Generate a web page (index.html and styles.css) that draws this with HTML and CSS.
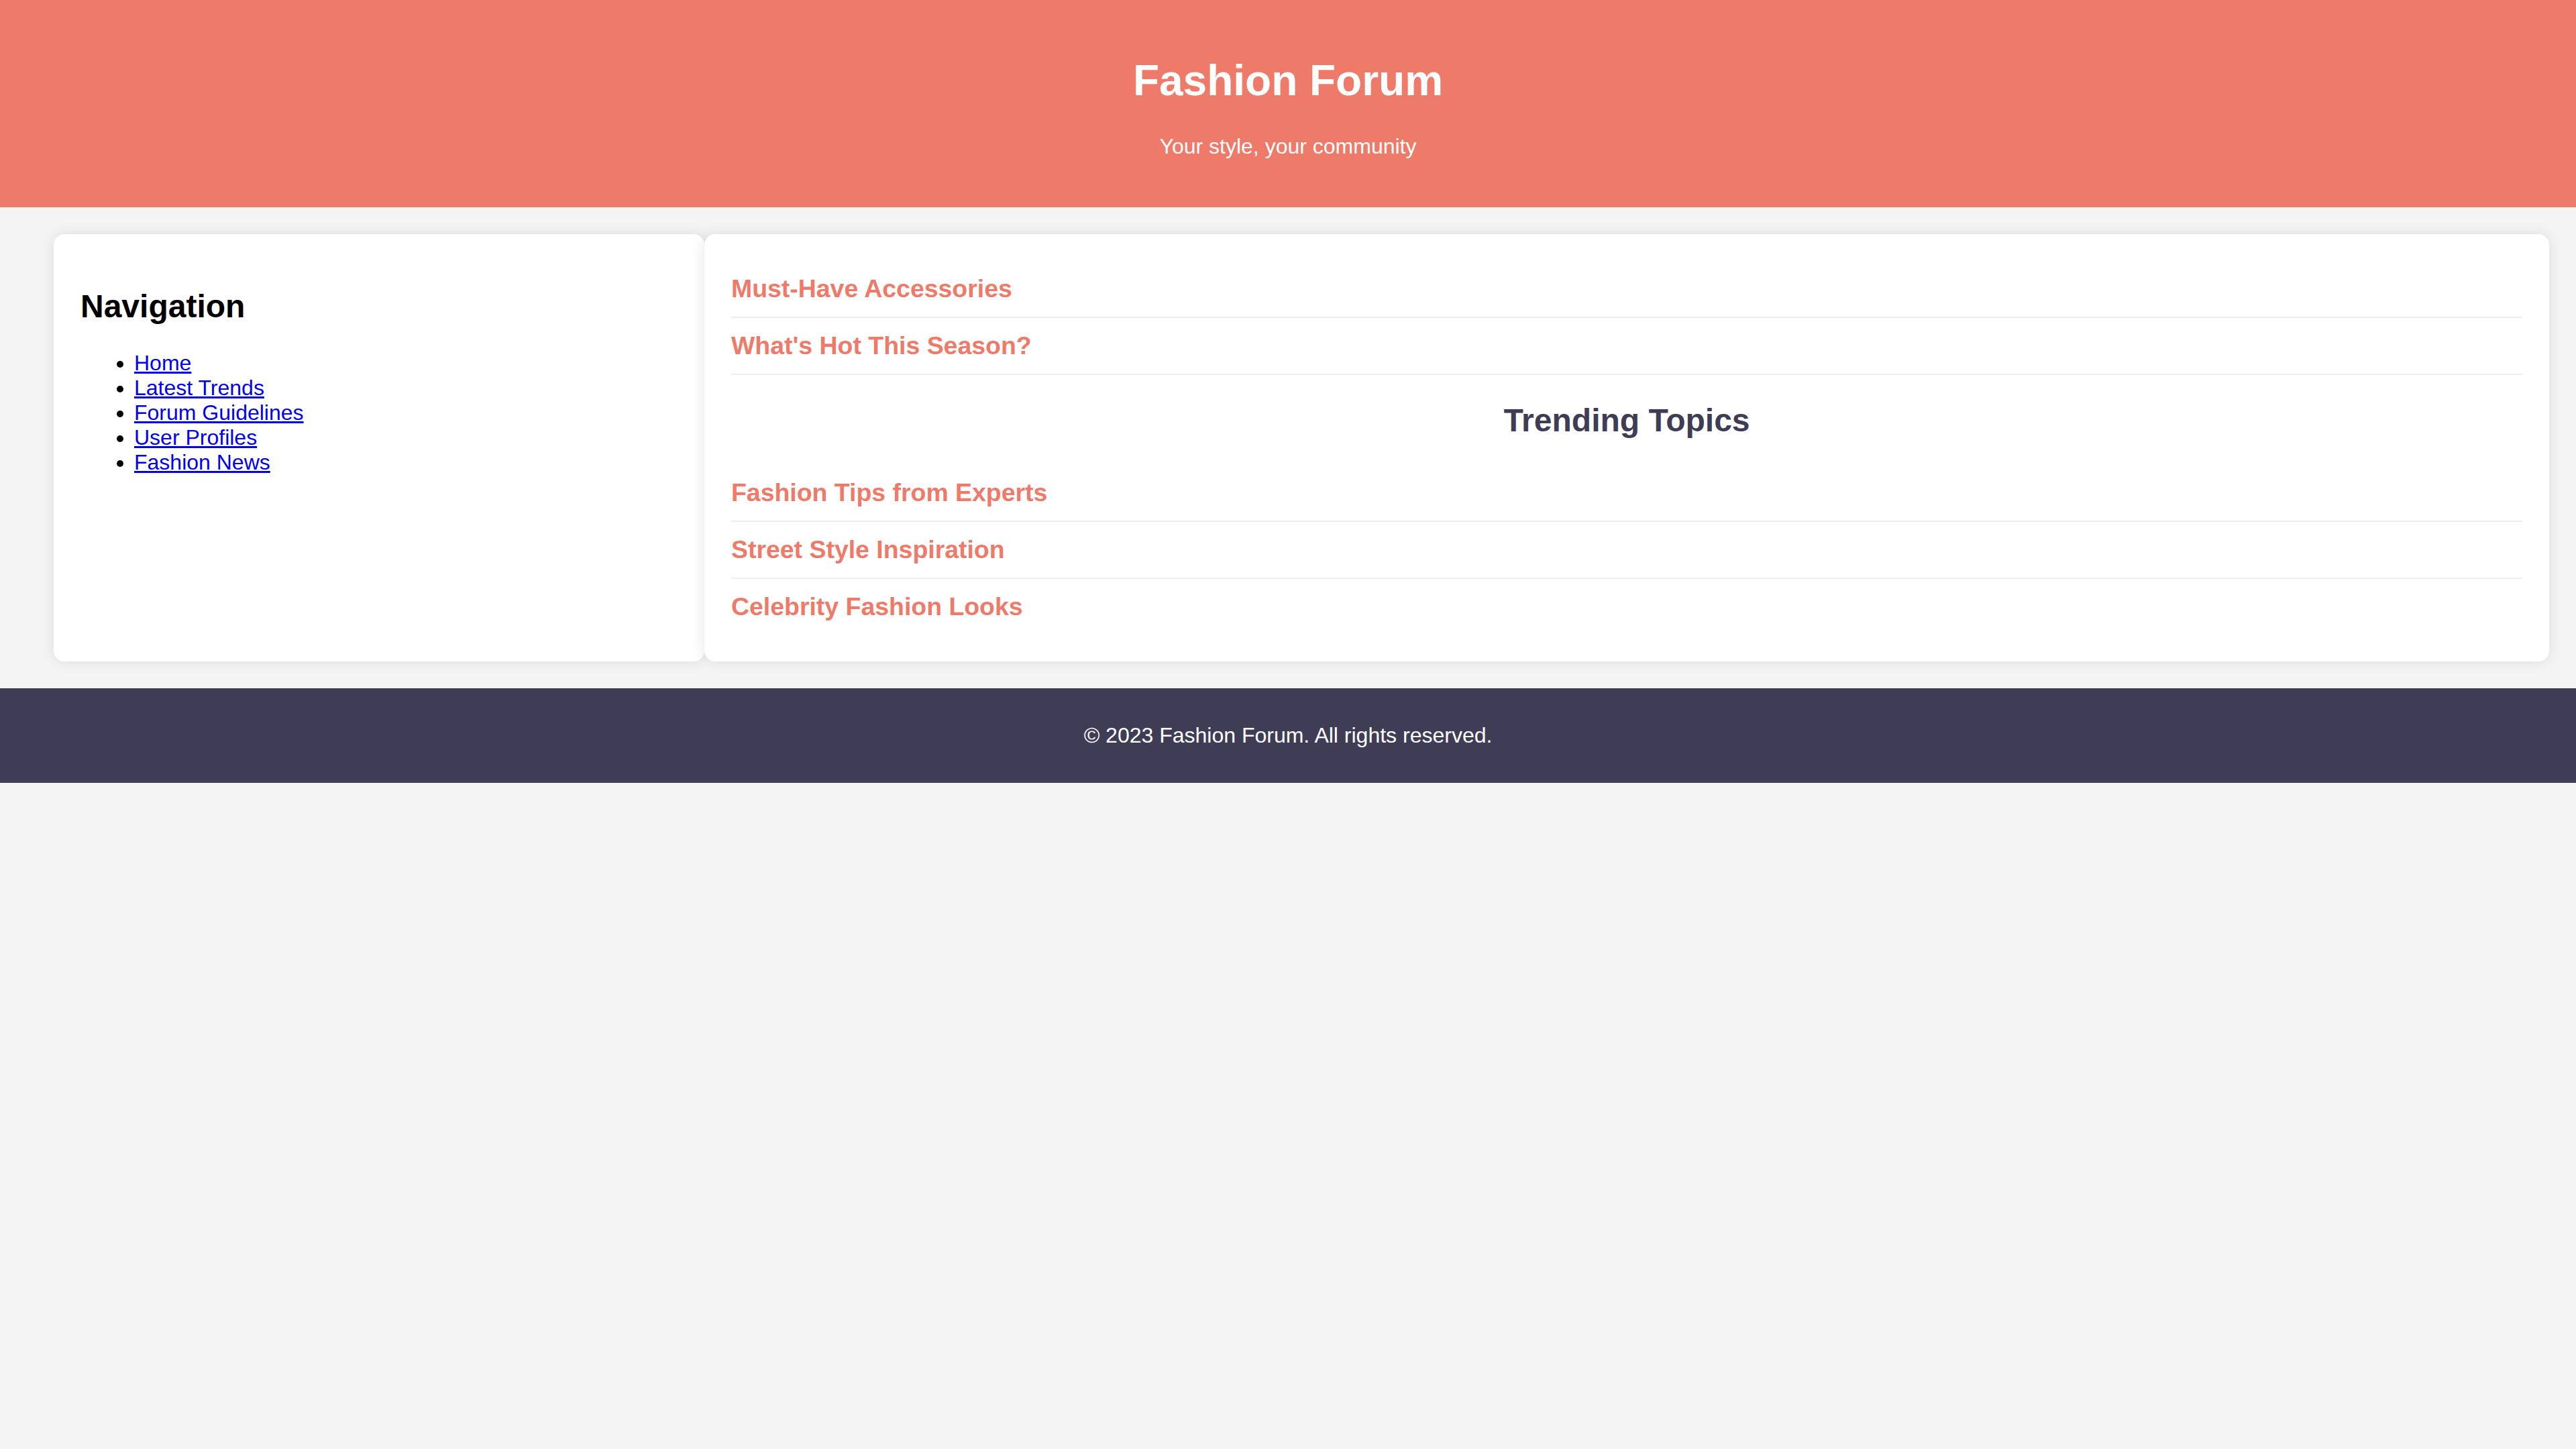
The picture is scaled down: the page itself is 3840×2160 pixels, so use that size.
FILE: index.html
```html
<!DOCTYPE html>
<html lang="en">
<head>
<meta charset="utf-8">
<title>Fashion Forum</title>
<link rel="stylesheet" href="styles.css">
</head>
<body>
<header class="site-header">
  <h1 class="site-title">Fashion Forum</h1>
  <p class="site-tagline">Your style, your community</p>
</header>
<div class="layout">
  <aside class="card sidebar">
    <h2 class="nav-title">Navigation</h2>
    <ul class="nav-list">
      <li><a href="#">Home</a></li>
      <li><a href="#">Latest Trends</a></li>
      <li><a href="#">Forum Guidelines</a></li>
      <li><a href="#">User Profiles</a></li>
      <li><a href="#">Fashion News</a></li>
    </ul>
  </aside>
  <main class="card content">
    <div class="topic"><h3 class="topic-title">Must-Have Accessories</h3></div>
    <div class="topic"><h3 class="topic-title">What's Hot This Season?</h3></div>
    <h2 class="section-title">Trending Topics</h2>
    <div class="topic"><h3 class="topic-title">Fashion Tips from Experts</h3></div>
    <div class="topic"><h3 class="topic-title">Street Style Inspiration</h3></div>
    <div class="topic"><h3 class="topic-title">Celebrity Fashion Looks</h3></div>
  </main>
</div>
<footer class="site-footer">
  <p class="copyright">&copy; 2023 Fashion Forum. All rights reserved.</p>
</footer>
</body>
</html>
```

FILE: styles.css
```css
html, body {
  margin: 0;
  padding: 0;
}

body {
  font-family: "Liberation Sans", Arial, sans-serif;
  font-size: 32px;
  background: #f4f4f4;
  color: #000;
}

.site-header {
  background: #ee7a6a;
  color: #fff;
  text-align: center;
  padding: 40px;
}

.site-title {
  font-size: 64px;
  font-weight: bold;
  margin: 42.88px 0;
}

.site-tagline {
  font-size: 32px;
  margin: 32px 0;
}

.layout {
  display: flex;
  align-items: stretch;
  padding: 40px;
}

.card {
  background: #fff;
  border-radius: 16px;
  box-shadow: 0 0 20px rgba(0, 0, 0, 0.1);
  padding: 40px;
}

.sidebar {
  flex: 1 1 0;
  margin-left: 40px;
}

.content {
  flex: 3 1 0;
}

.nav-title {
  font-size: 48px;
  font-weight: bold;
  margin: 39.84px 0;
}

.nav-list {
  margin: 32px 0;
  padding-left: 80px;
}

.nav-list a {
  color: #0000ee;
  text-decoration: underline;
}

.topic {
  padding: 20px 0;
  border-bottom: 2px solid #eee;
}

.topic:last-child {
  border-bottom: none;
}

.topic-title {
  margin: 0;
  font-size: 37.44px;
  font-weight: bold;
  color: #ee7a6a;
}

.section-title {
  font-size: 48px;
  font-weight: bold;
  color: #3f3d56;
  text-align: center;
  margin: 39.84px 0;
}

.site-footer {
  background: #3f3d56;
  color: #fff;
  text-align: center;
  padding: 20px;
}

.copyright {
  margin: 32px 0;
}
```
